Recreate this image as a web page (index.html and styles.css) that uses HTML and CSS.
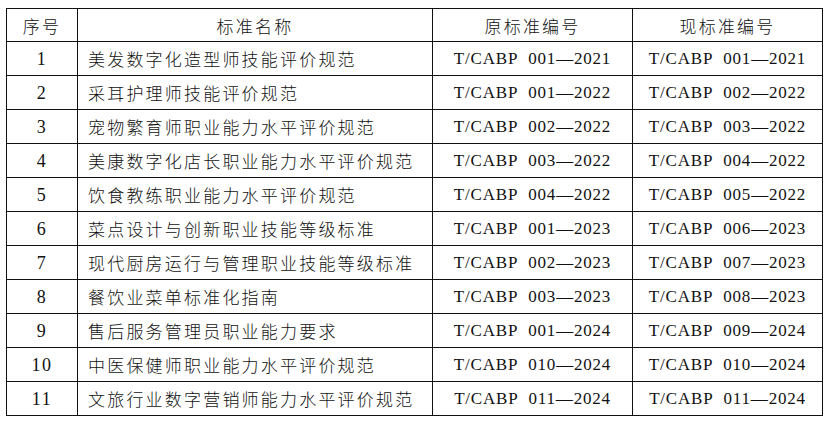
FILE: index.html
```html
<!DOCTYPE html>
<html lang="zh">
<head>
<meta charset="utf-8">
<link rel="stylesheet" href="styles.css">
</head>
<body>
<table class="std">
  <colgroup>
    <col class="c-no"><col class="c-name"><col class="c-old"><col class="c-new">
  </colgroup>
  <thead>
    <tr><th>序号</th><th>标准名称</th><th>原标准编号</th><th>现标准编号</th></tr>
  </thead>
  <tbody>
    <tr><td class="no">1</td><td class="name">美发数字化造型师技能评价规范</td><td class="code">T/CABP&nbsp; 001—2021</td><td class="code">T/CABP&nbsp; 001—2021</td></tr>
    <tr><td class="no">2</td><td class="name">采耳护理师技能评价规范</td><td class="code">T/CABP&nbsp; 001—2022</td><td class="code">T/CABP&nbsp; 002—2022</td></tr>
    <tr><td class="no">3</td><td class="name">宠物繁育师职业能力水平评价规范</td><td class="code">T/CABP&nbsp; 002—2022</td><td class="code">T/CABP&nbsp; 003—2022</td></tr>
    <tr><td class="no">4</td><td class="name">美康数字化店长职业能力水平评价规范</td><td class="code">T/CABP&nbsp; 003—2022</td><td class="code">T/CABP&nbsp; 004—2022</td></tr>
    <tr><td class="no">5</td><td class="name">饮食教练职业能力水平评价规范</td><td class="code">T/CABP&nbsp; 004—2022</td><td class="code">T/CABP&nbsp; 005—2022</td></tr>
    <tr><td class="no">6</td><td class="name">菜点设计与创新职业技能等级标准</td><td class="code">T/CABP&nbsp; 001—2023</td><td class="code">T/CABP&nbsp; 006—2023</td></tr>
    <tr><td class="no">7</td><td class="name">现代厨房运行与管理职业技能等级标准</td><td class="code">T/CABP&nbsp; 002—2023</td><td class="code">T/CABP&nbsp; 007—2023</td></tr>
    <tr><td class="no">8</td><td class="name">餐饮业菜单标准化指南</td><td class="code">T/CABP&nbsp; 003—2023</td><td class="code">T/CABP&nbsp; 008—2023</td></tr>
    <tr><td class="no">9</td><td class="name">售后服务管理员职业能力要求</td><td class="code">T/CABP&nbsp; 001—2024</td><td class="code">T/CABP&nbsp; 009—2024</td></tr>
    <tr><td class="no">10</td><td class="name">中医保健师职业能力水平评价规范</td><td class="code">T/CABP&nbsp; 010—2024</td><td class="code">T/CABP&nbsp; 010—2024</td></tr>
    <tr><td class="no">11</td><td class="name">文旅行业数字营销师能力水平评价规范</td><td class="code">T/CABP&nbsp; 011—2024</td><td class="code">T/CABP&nbsp; 011—2024</td></tr>
  </tbody>
</table>
</body>
</html>
```
FILE: styles.css
```css
html, body {
  margin: 0;
  padding: 0;
  background: #ffffff;
}
body {
  padding: 8px 0 0 6px;
  color: #111111;
  font-family: "Noto Sans CJK SC", "Liberation Serif", sans-serif;
}
.std {
  border-collapse: collapse;
  table-layout: fixed;
  width: 816px;
}
.c-no { width: 71px; }
.c-name { width: 355px; }
.c-old { width: 200px; }
.c-new { width: 190px; }
.std th, .std td {
  border: 1px solid #111111;
  padding: 0;
  white-space: nowrap;
  overflow: hidden;
}
.std thead tr { height: 33px; }
.std tbody tr { height: 34px; }
.std th {
  font-weight: 300;
  font-size: 17px;
  letter-spacing: 2.2px;
  text-align: center;
  line-height: 1;
}
.std td.name {
  font-weight: 300;
  font-size: 17px;
  letter-spacing: 2.2px;
  padding-left: 10px;
  text-align: left;
  line-height: 1;
}
.std td.no, .std td.code {
  font-family: "Liberation Serif", serif;
  font-size: 17px;
  letter-spacing: 0.8px;
  text-align: center;
  line-height: 1;
}
.std td.no {
  font-size: 18px;
  letter-spacing: 1.5px;
}
```
